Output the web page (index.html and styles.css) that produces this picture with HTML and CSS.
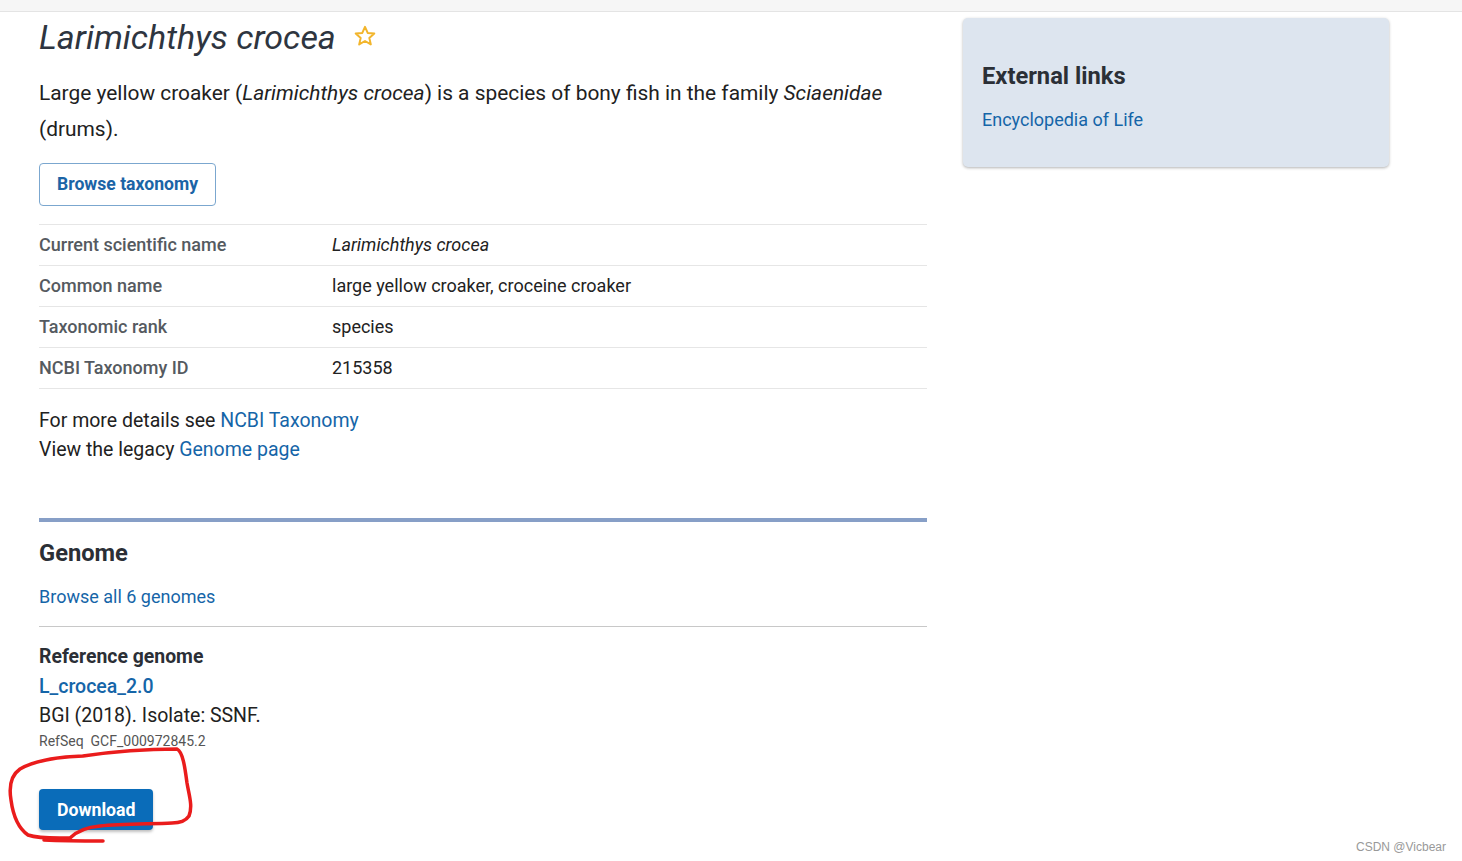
FILE: index.html
```html
<!DOCTYPE html>
<html lang="en">
<head>
<meta charset="utf-8">
<title>Larimichthys crocea</title>
<link rel="stylesheet" href="styles.css">
</head>
<body>
<div class="topbar"></div>
<div class="page">
  <main class="main">
    <div class="title-row">
      <h1 class="title">Larimichthys crocea</h1>
      <svg class="star" viewBox="0 0 24 24" width="24" height="24"><path d="M12 2.8l2.7 6.1 6.6.6-5 4.4 1.5 6.5L12 17l-5.8 3.4 1.5-6.5-5-4.4 6.6-.6z" fill="none" stroke="#f2b52c" stroke-width="2" stroke-linejoin="round"/></svg>
    </div>
    <p class="intro">Large yellow croaker (<em>Larimichthys crocea</em>) is a species of bony fish in the family <em>Sciaenidae</em> (drums).</p>
    <a class="btn-outline" href="#">Browse taxonomy</a>
    <table class="facts">
      <tr><th>Current scientific name</th><td><em>Larimichthys crocea</em></td></tr>
      <tr><th>Common name</th><td>large yellow croaker, croceine croaker</td></tr>
      <tr><th>Taxonomic rank</th><td>species</td></tr>
      <tr><th>NCBI Taxonomy ID</th><td>215358</td></tr>
    </table>
    <div class="more">
      <div>For more details see <a href="#">NCBI Taxonomy</a></div>
      <div>View the legacy <a href="#">Genome page</a></div>
    </div>
    <section class="genome">
      <h2 class="section-title">Genome</h2>
      <a class="browse-all" href="#">Browse all 6 genomes</a>
      <div class="ref">
        <h3 class="ref-title">Reference genome</h3>
        <a class="ref-name" href="#">L_crocea_2.0</a>
        <div class="ref-desc">BGI (2018). Isolate: SSNF.</div>
        <div class="ref-acc">RefSeq&nbsp; GCF_000972845.2</div>
        <button class="btn-primary">Download</button>
      </div>
    </section>
  </main>
  <aside class="side">
    <div class="card">
      <h2 class="card-title">External links</h2>
      <a class="card-link" href="#">Encyclopedia of Life</a>
    </div>
  </aside>
</div>
<svg class="annot" width="210" height="110" viewBox="0 740 210 110">
  <path d="M83 756 C110 752 150 749 177 749 C183 752 185 768 187 783 C189 795 193 806 189 816 C185 822 178 823 172 823 C150 824 120 824 100 826 C88 827 78 830 70 838 C58 838 40 839 28 835 C18 828 13 815 11 800 C9 788 10 776 20 769 C32 762 55 757 83 756" fill="none" stroke="#ea1c1c" stroke-width="3.5" stroke-linecap="round" stroke-linejoin="round"/>
  <path d="M44 840 C65 841 85 841 103 841" fill="none" stroke="#ea1c1c" stroke-width="3.5" stroke-linecap="round"/>
</svg>
<div class="watermark">CSDN @Vicbear</div>
</body>
</html>
```

FILE: styles.css
```css
* { box-sizing: border-box; }
html, body { margin: 0; padding: 0; background: #fff; }
body {
  font-family: Roboto, "Noto Sans", Arial, sans-serif;
  color: #212121;
  width: 1462px;
  height: 861px;
  overflow: hidden;
  position: relative;
}
a { color: #1565a8; text-decoration: none; }
.topbar {
  height: 12px;
  background: #f6f6f6;
  border-bottom: 1px solid #e4e4e4;
}
.page {
  display: flex;
  gap: 36px;
  padding-left: 39px;
}
.main { width: 888px; }
.side { width: 426px; padding-top: 6px; }

.title-row { display: flex; align-items: center; height: 52px; margin-top: -1px; }
.title {
  margin: 0;
  font-size: 34px;
  font-weight: 400;
  font-style: italic;
  color: #2e3540;
}
.star { margin-left: 17px; margin-top: -3px; }
.intro {
  margin: 12px 0 0;
  font-size: 20.9px;
  line-height: 36px;
  color: #212121;
  width: 880px;
}
.btn-outline {
  display: inline-block;
  margin-top: 16px;
  padding: 0 17px;
  height: 43px;
  line-height: 41px;
  border: 1px solid #7ba7cf;
  border-radius: 4px;
  font-size: 17.6px;
  font-weight: 700;
  color: #1b64a6;
}
.facts {
  margin-top: 18px;
  width: 888px;
  border-collapse: collapse;
  border-top: 1px solid #e6e6e6;
}
.facts th, .facts td {
  height: 41px;
  padding: 0 0 2px;
  border-bottom: 1px solid #e6e6e6;
  font-size: 18px;
  text-align: left;
  vertical-align: middle;
}
.facts th { width: 293px; font-weight: 500; color: #555a60; }
.facts td { color: #222; }
.more {
  margin-top: 17px;
  font-size: 19.5px;
  line-height: 29px;
}
.genome {
  margin-top: 54px;
  border-top: 4px solid #879fc7;
}
.section-title {
  margin: 16px 0 0;
  font-size: 23.7px;
  font-weight: 700;
  color: #2b2f36;
  line-height: 30px;
}
.browse-all {
  display: block;
  margin-top: 16px;
  font-size: 18px;
  line-height: 26px;
}
.ref {
  margin-top: 16px;
  border-top: 1px solid #c8c8c8;
  padding-top: 17px;
}
.ref-title {
  margin: 0;
  font-size: 19.4px;
  font-weight: 700;
  color: #2b2f36;
  line-height: 26px;
}
.ref-name {
  display: block;
  margin-top: 4px;
  font-size: 19.5px;
  font-weight: 500;
  line-height: 26px;
}
.ref-desc {
  margin-top: 3px;
  font-size: 19.5px;
  line-height: 26px;
}
.ref-acc {
  margin-top: 4px;
  font-size: 14px;
  line-height: 17px;
  color: #555;
}
.btn-primary {
  display: block;
  margin-top: 39px;
  height: 41px;
  padding: 0 18px;
  border: none;
  border-radius: 4px;
  background: #0a6cb9;
  color: #fff;
  font-family: Roboto, Arial, sans-serif;
  font-size: 17.7px;
  font-weight: 700;
  box-shadow: 0 2px 3px rgba(0,0,0,0.25);
}
.card {
  background: #dde5ef;
  border-radius: 5px;
  box-shadow: 0 1px 3px rgba(0,0,0,0.3);
  height: 149px;
  padding: 43px 19px 0;
}
.card-title {
  margin: 0;
  font-size: 23.7px;
  font-weight: 700;
  color: #2b2f36;
  line-height: 30px;
}
.card-link {
  display: block;
  margin-top: 18px;
  font-size: 18px;
}
.annot {
  position: absolute;
  left: 0;
  top: 740px;
  pointer-events: none;
}
.watermark {
  position: absolute;
  right: 16px;
  bottom: 7px;
  font-family: "Liberation Sans", Arial, sans-serif;
  font-size: 12px;
  color: #999;
}
```
